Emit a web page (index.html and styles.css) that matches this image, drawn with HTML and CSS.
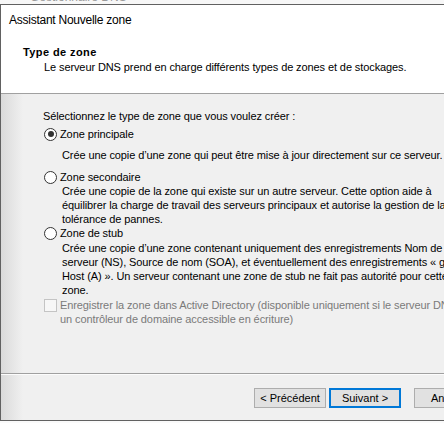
FILE: index.html
```html
<!DOCTYPE html>
<html lang="fr">
<head>
<meta charset="utf-8">
<title>Assistant Nouvelle zone</title>
<link rel="stylesheet" href="styles.css">
</head>
<body>
<div class="behind"><span class="behind-text">Gestionnaire DNS</span></div>
<div class="window">
  <div class="head">
    <div class="title">Assistant Nouvelle zone</div>
    <div class="heading">Type de zone</div>
    <div class="subtitle">Le serveur DNS prend en charge différents types de zones et de stockages.</div>
  </div>
  <div class="content">
    <div class="prompt">Sélectionnez le type de zone que vous voulez créer :</div>
    <div class="option opt1"><span class="radio checked"></span><span class="label">Zone principale</span></div>
    <div class="desc desc1">Crée une copie d’une zone qui peut être mise à jour directement sur ce serveur.</div>
    <div class="option opt2"><span class="radio"></span><span class="label">Zone secondaire</span></div>
    <div class="desc desc2">Crée une copie de la zone qui existe sur un autre serveur. Cette option aide à<br>équilibrer la charge de travail des serveurs principaux et autorise la gestion de la<br>tolérance de pannes.</div>
    <div class="option opt3"><span class="radio"></span><span class="label">Zone de stub</span></div>
    <div class="desc desc3">Crée une copie d’une zone contenant uniquement des enregistrements Nom de<br>serveur (NS), Source de nom (SOA), et éventuellement des enregistrements « glue<br>Host (A) ». Un serveur contenant une zone de stub ne fait pas autorité pour cette<br>zone.</div>
    <div class="check-row"><span class="checkbox"></span><span class="check-label">Enregistrer la zone dans Active Directory (disponible uniquement si le serveur DNS est<br>un contrôleur de domaine accessible en écriture)</span></div>
  </div>
  <div class="sep"></div>
  <div class="footer">
    <div class="btn">&lt; Précédent</div>
    <div class="btn primary">Suivant &gt;</div>
    <div class="btn cancel">Annuler</div>
  </div>
</div>
</body>
</html>
```

FILE: styles.css
```css
html, body {
  margin: 0;
  padding: 0;
}
body {
  width: 444px;
  height: 423px;
  overflow: hidden;
  background: #fafafa;
  font-family: "Liberation Sans", Arial, sans-serif;
  font-size: 11px;
  color: #000;
}
.behind {
  height: 4px;
  overflow: hidden;
  background: #f7f7f7;
}
.behind-text {
  display: block;
  margin-top: -9px;
  padding-left: 30px;
  font-size: 12px;
  line-height: 12px;
  color: #9a9a9a;
}
.window {
  width: 620px;
  height: 415px;
  border: 1px solid #616161;
  border-right: none;
  display: flex;
  flex-direction: column;
}
.head {
  height: 88px;
  background: #fff;
  border-bottom: 1px solid #a0a0a0;
  flex: none;
}
.title {
  margin-top: 7px;
  padding-left: 8px;
  font-size: 12px;
  line-height: 16px;
  letter-spacing: -0.25px;
}
.heading {
  margin-top: 17px;
  padding-left: 22px;
  font-weight: bold;
  line-height: 14px;
  letter-spacing: 0.4px;
}
.subtitle {
  margin-top: 1px;
  padding-left: 43px;
  line-height: 14px;
  letter-spacing: -0.1px;
}
.content {
  height: 279px;
  flex: none;
  box-sizing: border-box;
  padding: 15px 0 0 42px;
  background: linear-gradient(to right, #dadada, #f0f0f0 22px);
  line-height: 14px;
  letter-spacing: -0.1px;
  white-space: nowrap;
}
.option {
  display: flex;
  align-items: center;
  height: 14px;
  padding-left: 1px;
}
.opt1 { margin-top: 4px; }
.opt2 { margin-top: 8px; }
.opt3 { margin-top: 0; }
.radio {
  width: 11px;
  height: 11px;
  border: 1px solid #333;
  border-radius: 50%;
  background: #fff;
  margin-right: 3px;
  display: flex;
  align-items: center;
  justify-content: center;
  flex: none;
}
.radio.checked::after {
  content: "";
  width: 6px;
  height: 6px;
  border-radius: 50%;
  background: #333;
}
.desc {
  padding-left: 19px;
}
.desc1 { margin-top: 7px; }
.desc2 { margin-top: 0; }
.desc3 { margin-top: 1px; }
.check-row {
  display: flex;
  align-items: flex-start;
  margin-top: 1px;
  padding-left: 1px;
}
.checkbox {
  width: 11px;
  height: 11px;
  border: 1px solid #c4c4c4;
  background: #f7f7f7;
  margin-right: 3px;
  margin-top: 1px;
  flex: none;
}
.check-label {
  color: #7a7a7a;
}
.sep {
  height: 1px;
  background: #a0a0a0;
  border-bottom: 1px solid #fcfcfc;
  flex: none;
}
.footer {
  flex: 1;
  display: flex;
  align-items: flex-start;
  padding: 13px 0 0 253px;
  background: linear-gradient(to right, #dadada, #f0f0f0 22px);
}
.btn {
  width: 72px;
  height: 20px;
  box-sizing: border-box;
  border: 1px solid #adadad;
  background: #e1e1e1;
  display: flex;
  align-items: center;
  justify-content: center;
  line-height: 14px;
  flex: none;
}
.btn.primary {
  margin-left: 3px;
  border: 2px solid #0078d7;
}
.btn.cancel {
  margin-left: 13px;
}
```
